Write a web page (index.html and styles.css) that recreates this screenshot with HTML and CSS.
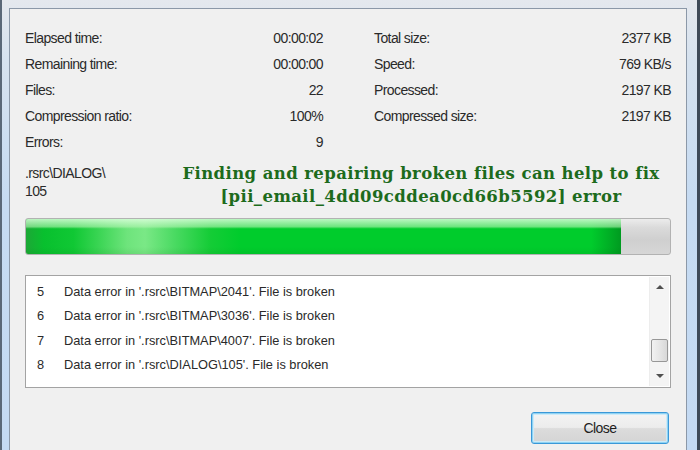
FILE: index.html
```html
<!DOCTYPE html>
<html>
<head>
<meta charset="utf-8">
<link rel="stylesheet" href="styles.css">
</head>
<body>
<div class="window">
  <div class="panel">
    <div class="stats">
      <div class="col">
        <div class="row"><span>Elapsed time:</span><span>00:00:02</span></div>
        <div class="row"><span>Remaining time:</span><span>00:00:00</span></div>
        <div class="row"><span>Files:</span><span>22</span></div>
        <div class="row"><span>Compression ratio:</span><span>100%</span></div>
        <div class="row"><span>Errors:</span><span>9</span></div>
      </div>
      <div class="col">
        <div class="row"><span>Total size:</span><span>2377 KB</span></div>
        <div class="row"><span>Speed:</span><span>769 KB/s</span></div>
        <div class="row"><span>Processed:</span><span>2197 KB</span></div>
        <div class="row"><span>Compressed size:</span><span>2197 KB</span></div>
      </div>
    </div>
    <div class="current">
      <div class="path">.rsrc\DIALOG\<br>105</div>
      <div class="headline">Finding and repairing broken files can help to fix<br>[pii_email_4dd09cddea0cd66b5592] error</div>
    </div>
    <div class="progress"><div class="fill"></div></div>
    <div class="listbox">
      <div class="items">
        <div class="item"><span class="num">5</span><span>Data error in '.rsrc\BITMAP\2041'. File is broken</span></div>
        <div class="item"><span class="num">6</span><span>Data error in '.rsrc\BITMAP\3036'. File is broken</span></div>
        <div class="item"><span class="num">7</span><span>Data error in '.rsrc\BITMAP\4007'. File is broken</span></div>
        <div class="item"><span class="num">8</span><span>Data error in '.rsrc\DIALOG\105'. File is broken</span></div>
      </div>
      <div class="scrollbar">
        <div class="arrow up"></div>
        <div class="track"><div class="thumb"></div></div>
        <div class="arrow down"></div>
      </div>
    </div>
    <div class="actions">
      <button class="btn">Close</button>
    </div>
  </div>
</div>
</body>
</html>
```

FILE: styles.css
```css
* { box-sizing: border-box; }
html, body { margin: 0; padding: 0; }
body {
  width: 700px;
  height: 450px;
  overflow: hidden;
  font-family: "Liberation Sans", Arial, sans-serif;
  font-size: 14px;
  color: #2a2a2a;
}
.window {
  width: 700px;
  height: 450px;
  display: flex;
  padding: 8px 11px 0 7px;
  border-left: 2px solid #5a6878;
  border-right: 3px solid #3e4a58;
  background: linear-gradient(to bottom, #e4e8ee 0px, #d6e2ef 60px, #c6dbf2 200px, #c4daf3 450px);
}
.panel {
  flex: 1;
  display: flex;
  flex-direction: column;
  background: #f0f0f0;
  border: 1px solid #8b98a8;
  border-bottom: none;
  padding: 16px 15px 0 15px;
}
.stats {
  display: grid;
  grid-template-columns: 298px 297px;
  column-gap: 51px;
}
.row {
  display: flex;
  justify-content: space-between;
  height: 26px;
  line-height: 26px;
  letter-spacing: -0.6px;
}
.current {
  display: flex;
  margin-top: 4px;
  height: 49px;
}
.path {
  width: 146px;
  padding-top: 5px;
  line-height: 18px;
  letter-spacing: -0.6px;
}
.headline {
  flex: 1;
  padding-top: 3px;
  text-align: center;
  font-family: "DejaVu Serif", "Liberation Serif", serif;
  font-weight: bold;
  font-size: 16.5px;
  line-height: 23px;
  color: #1d6b1c;
  letter-spacing: 0.4px;
  white-space: nowrap;
}
.progress {
  margin-top: 10px;
  height: 37px;
  border: 1px solid #b2b2b2;
  border-radius: 3px;
  background: linear-gradient(to bottom, #ececec 0%, #dadada 25%, #cfcfcf 60%, #d6d6d6 100%);
  overflow: hidden;
  display: flex;
}
.fill {
  width: 595px;
  height: 100%;
  background:
    linear-gradient(to bottom, rgba(220,255,220,0.85) 0%, rgba(180,245,180,0.6) 22%, rgba(0,0,0,0) 28%, rgba(0,0,0,0) 80%, rgba(0,80,0,0.08) 100%),
    linear-gradient(to right, #1ca836 0%, #08c02e 3%, #10c834 8%, #38d452 12%, #6ee47c 17%, #7ae886 20%, #4ada62 25%, #14cc36 31%, #00cc2c 36%, #00cc2c 95%, #00aa24 98.5%, #009a20 100%);
}
.listbox {
  margin-top: 20px;
  height: 113px;
  border: 1px solid #a3a3a3;
  background: #ffffff;
  display: flex;
}
.items {
  flex: 1;
  padding: 4px 0 0 11px;
  font-size: 12.8px;
}
.item {
  display: flex;
  height: 24.4px;
  line-height: 24.4px;
}
.num {
  width: 27px;
}
.scrollbar {
  width: 20px;
  margin: 1px 1px 1px 0;
  background: #f4f4f4;
  border-left: 1px solid #ededed;
  display: flex;
  flex-direction: column;
  align-items: center;
}
.arrow {
  height: 20px;
  width: 100%;
  display: flex;
  align-items: center;
  justify-content: center;
}
.arrow::before {
  content: "";
  width: 0;
  height: 0;
  border-left: 4px solid transparent;
  border-right: 4px solid transparent;
}
.arrow.up::before { border-bottom: 4px solid #505050; }
.arrow.down::before { border-top: 4px solid #505050; }
.track {
  flex: 1;
  width: 100%;
  display: flex;
  flex-direction: column;
  justify-content: flex-end;
  padding: 0 1px 4px 1px;
}
.thumb {
  height: 23px;
  border: 1px solid #979797;
  border-radius: 2px;
  background: linear-gradient(to right, #f2f2f2 0%, #e6e6e6 50%, #d8d8d8 100%);
}
.actions {
  display: flex;
  justify-content: flex-end;
  margin-top: 24px;
  padding-right: 2px;
}
.btn {
  width: 138px;
  height: 32px;
  border: 1px solid #3a98d8;
  border-radius: 3px;
  box-shadow: inset 0 0 0 1px #8fd2f2, inset 0 0 0 2px #cdeaf8;
  background: linear-gradient(to bottom, #f4f4f4 0%, #ececec 48%, #dcdcdc 52%, #d4d4d4 100%);
  font-family: "Liberation Sans", Arial, sans-serif;
  font-size: 14px;
  letter-spacing: -0.6px;
  color: #1e1e1e;
  padding: 0;
}
```
